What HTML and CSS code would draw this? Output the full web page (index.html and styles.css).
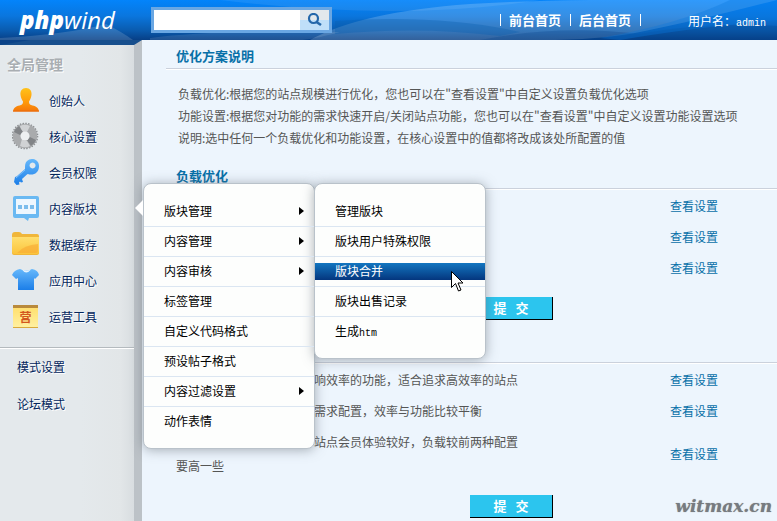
FILE: index.html
```html
<!DOCTYPE html>
<html lang="zh-CN">

<head>
	<meta charset="UTF-8">
	<title>phpwind</title>
	<meta name="viewport" content="width=device-width, initial-scale=1.0">
	<link rel="stylesheet" href="styles.css">
</head>

<body>
	<header class="head">
		<svg class="head-bg" viewBox="0 0 777 40" preserveAspectRatio="none" aria-hidden="true">
			<path d="M0 38Q70 34 106 24Q122 32 133 40H0z" fill="#fff" opacity=".15"/>
			<path d="M220 0Q400 22 540 0z" fill="#fff" opacity=".08"/>
			<path d="M310 40Q360 12 470 4Q560 -2 777 0Q700 20 640 32Q600 40 540 40z" fill="#fff" opacity=".18"/>
			<path d="M335 21Q440 14 520 32L500 36Q420 26 335 34z" fill="#0a5fae" opacity=".35"/>
			<path d="M150 38Q210 30 340 32Q310 40 300 40H150z" fill="#fff" opacity=".1"/>
			<path d="M480 40Q560 24 640 34Q700 22 777 26V40z" fill="#06458f" opacity=".3"/>
			<path d="M600 38Q680 24 730 0H777V20Q690 28 620 40z" fill="#0a78e0" opacity=".35"/>
		</svg>
		<svg class="head-corner" viewBox="0 0 142 5" aria-hidden="true">
			<path d="M0 0H142L134 5H0z" fill="#174f8d"/>
			<path d="M0 0H30L0 5z" fill="#0b4388"/>
		</svg>
		<a class="logo" href="#"><b>php</b>wind</a>
		<form class="search">
			<input type="text" aria-label="搜索">
			<button type="button" aria-label="搜索">
				<svg width="16" height="14" viewBox="0 0 16 14"><circle cx="6.500" cy="5.500" r="4.500" fill="none" stroke="#2467aa" stroke-width="2.200"/><path d="M9.500 9l4.500 3" stroke="#2467aa" stroke-width="2.600"/></svg>
			</button>
		</form>
		<nav class="links">
			<a href="#">前台首页</a>
			<a href="#">后台首页</a>
		</nav>
		<span class="user">用户名：<span class="en">admin</span></span>
	</header>

	<div class="wrap">
		<aside class="side">
			<h1>全局管理</h1>
			<ul class="nav">
				<li>
					<svg width="28" height="28" viewBox="0 0 28 28">
						<defs>
							<linearGradient id="gOrange" x2="0" y2="1"><stop offset="0" stop-color="#ffc21a"/><stop offset=".6" stop-color="#ff9a0a"/><stop offset="1" stop-color="#f4760a"/></linearGradient>
							<linearGradient id="gBlue" x2="0" y2="1"><stop offset="0" stop-color="#66b8fb"/><stop offset="1" stop-color="#1b7ee8"/></linearGradient>
							<linearGradient id="gYellow" x2="0" y2="1"><stop offset="0" stop-color="#ffdf6e"/><stop offset="1" stop-color="#fbc43c"/></linearGradient>
						</defs>
						<path d="M14 2c4 0 6 3 5.500 7-.4 3-1.500 5-2.500 6.500 0 2 .5 3 2 3.500 4 1 7.500 2 8 6.500H1c.5-4.500 4-5.500 8-6.500 1.500-.5 2-1.500 2-3.500C10 14 8.900 12 8.500 9 8 5 10 2 14 2z" fill="url(#gOrange)"/>
						<path d="M1 25h26" stroke="#e86a0c"/>
					</svg>
					<a href="#">创始人</a>
				</li>
				<li>
					<svg width="28" height="28" viewBox="0 0 28 28">
						<circle cx="13" cy="14" r="12.500" fill="none" stroke="#8c8f92" stroke-width="1.600" stroke-dasharray="1.500 1.300"/>
						<circle cx="13" cy="14" r="8.200" fill="none" stroke="#a9abad" stroke-width="8"/>
						<path d="M8 4a11 11 0 0 1 10 0l-3 6a5 5 0 0 0-5 1zM18 24a11 11 0 0 1-10 0l2-7a5 5 0 0 0 5 2z" fill="#d0d2d4"/>
						<path d="M2 10a12 12 0 0 1 5-6l4 6-3 3zM24 18a12 12 0 0 1-5 6l-4-6 3-3z" fill="#818487"/>
						<circle cx="13" cy="14" r="4.500" fill="#eef0f1"/>
					</svg>
					<a href="#">核心设置</a>
				</li>
				<li>
					<svg width="28" height="28" viewBox="0 0 28 28">
						<path fill-rule="evenodd" d="M15 3a7 7 0 0 1 6-2c4 .5 6.500 4 6 8-.5 5-4 8-9 7.500-1 0-2-.3-2.500-.5L10 21l1 3-2 .5-1-1-1 1 .5 2-3 .500-2.500-3 1-5 1.500-.5 8.500-7.500c0-4 0-6 2-8zM20.500 4.500a3 3 0 1 0 .1 0z" fill="url(#gBlue)"/>
						<path d="M4 20l9-8" stroke="#9bd2ff" opacity=".7"/>
					</svg>
					<a href="#">会员权限</a>
				</li>
				<li>
					<svg width="28" height="28" viewBox="0 0 28 28">
						<path d="M3 2h22q2 0 2 2v18q0 2-2 2h-8l-1 3-4-3H3q-2 0-2-2V4q0-2 2-2z" fill="#6ab9f2"/>
						<path d="M4 5h20v15H4z" fill="#eef7fe"/>
						<path d="M6 11h4v4H6zM12 11h4v4h-4zM18 11h4v4h-4z" fill="#7cbdec"/>
					</svg>
					<a href="#">内容版块</a>
					<div class="flyout">
						<ul class="menu">
							<li class="more"><a href="#">版块管理</a></li>
							<li class="more"><a href="#">内容管理</a></li>
							<li class="more"><a href="#">内容审核</a></li>
							<li><a href="#">标签管理</a></li>
							<li><a href="#">自定义代码格式</a></li>
							<li><a href="#">预设帖子格式</a></li>
							<li class="more"><a href="#">内容过滤设置</a></li>
							<li><a href="#">动作表情</a></li>
						</ul>
						<ul class="menu">
							<li><a href="#">管理版块</a></li>
							<li><a href="#">版块用户特殊权限</a></li>
							<li class="on"><a href="#">版块合并</a>
								<svg class="cursor" width="13" height="21" viewBox="0 0 13 21"><path d="M.5.500v16l4-4 3 7.500 2.500-1-3-7h5z" fill="#fff" stroke="#000"/></svg>
							</li>
							<li><a href="#">版块出售记录</a></li>
							<li><a href="#">生成<span class="en">htm</span></a></li>
						</ul>
					</div>
				</li>
				<li>
					<svg width="28" height="28" viewBox="0 0 28 28">
						<path d="M0 5q0-3 3-3h4q2 0 3 2h15q2 0 2 2v17q0 2-2 2H2q-2 0-2-2z" fill="#f0b63a"/>
						<path d="M0 7h27v15q0 2-2 2H2q-2 0-2-2z" fill="url(#gYellow)"/>
						<path d="M5 23q7-8 21-9v7q0 2-2 2z" fill="#f8a832" opacity=".6"/>
					</svg>
					<a href="#">数据缓存</a>
				</li>
				<li>
					<svg width="28" height="28" viewBox="0 0 28 28">
						<path d="M8 3q6 3 12 0 6 1 7 6l-4 4-1-1v12H6V12l-2 1-4-4Q2 4 8 3z" fill="url(#gBlue)"/>
						<path d="M10 3.500q4 6 9 0-4 2-9 0z" fill="#e6f3fe"/>
					</svg>
					<a href="#">应用中心</a>
				</li>
				<li>
					<span class="cal">营</span>
					<a href="#">运营工具</a>
				</li>
			</ul>
			<ul class="modes">
				<li><a href="#">模式设置</a></li>
				<li><a href="#">论坛模式</a></li>
			</ul>
		</aside>

		<main class="main">
			<section>
				<h2>优化方案说明</h2>
				<p>负载优化:根据您的站点规模进行优化，您也可以在"查看设置"中自定义设置负载优化选项<br>
					功能设置:根据您对功能的需求快速开启/关闭站点功能，您也可以在"查看设置"中自定义设置功能设置选项<br>
					说明:选中任何一个负载优化和功能设置，在核心设置中的值都将改成该处所配置的值</p>
			</section>

			<section>
				<h2>负载优化</h2>
				<table>
					<tr>
						<td></td>
						<td><a href="#">查看设置</a></td>
					</tr>
					<tr>
						<td></td>
						<td><a href="#">查看设置</a></td>
					</tr>
					<tr>
						<td></td>
						<td><a href="#">查看设置</a></td>
					</tr>
				</table>
				<div class="submit"><button type="button">提&nbsp;&nbsp;&nbsp;交</button></div>
			</section>

			<section class="func">
				<table>
					<tr>
						<td>响效率的功能，适合追求高效率的站点</td>
						<td><a href="#">查看设置</a></td>
					</tr>
					<tr>
						<td>需求配置，效率与功能比较平衡</td>
						<td><a href="#">查看设置</a></td>
					</tr>
					<tr>
						<td>站点会员体验较好，负载较前两种配置要高一些</td>
						<td><a href="#">查看设置</a></td>
					</tr>
				</table>
				<div class="submit"><button type="button">提&nbsp;&nbsp;&nbsp;交</button></div>
			</section>
			<span class="mark">witmax.cn</span>
		</main>
	</div>
</body>

</html>
```
FILE: styles.css
```css
* {
	box-sizing: border-box;
	margin: 0;
	padding: 0;
}

body {
	display: flex;
	flex-direction: column;
	min-height: 100vh;
	font-family: "Noto Sans CJK SC", sans-serif;
	font-size: 12px;
	color: #555;
	background: #edf5fd;
}

ul {
	list-style: none;
}

a {
	color: inherit;
	text-decoration: none;
}

.en {
	font-family: "Liberation Mono", monospace;
	font-size: 10px;
}

/* header */
.head {
	position: relative;
	display: flex;
	align-items: center;
	height: 40px;
	padding-right: 11px;
	color: #fff;
	background: linear-gradient(#0384fb, #0a76de 40%, #0a5cb0 75%, #073f86);
}

.head > * {
	position: relative;
}

.head .head-bg {
	position: absolute;
	left: 0;
	top: 0;
	width: 100%;
	height: 40px;
}

.head .head-corner {
	position: absolute;
	left: 0;
	top: 40px;
	width: 142px;
	height: 5px;
	z-index: 1;
}

.logo {
	width: 131px;
	margin-left: 20px;
	font: italic 500 24px/40px "Open Sans", sans-serif;
}

.logo b {
	font-weight: 800;
}

.search {
	display: flex;
	width: 181px;
	height: 26px;
	border: 3px solid #6aa7e3;
}

.search input {
	flex: 1;
	min-width: 0;
	border: 0;
	background: #fff;
}

.search button {
	width: 29px;
	border: 0;
	background: linear-gradient(#e3e8ec 50%, #bfdff9 50%);
}

.search svg {
	display: block;
	margin: 0 auto;
}

.links {
	display: flex;
	margin-left: auto;
	border-right: 1px solid #fff;
	font-size: 13px;
	font-weight: bold;
	line-height: 12px;
}

.links a {
	width: 70px;
	padding-left: 8px;
	border-left: 1px solid #fff;
}

.user {
	margin-left: 47px;
	font-family: "Noto Sans CJK TC", sans-serif;
}

/* sidebar */
.wrap {
	display: flex;
	flex: 1;
}

.side {
	flex: none;
	width: 142px;
	padding-top: 12px;
	border-right: 8px solid #bcc2c7;
	background: linear-gradient(90deg, #e4e9ec 60%, #e2e6e8 90%, #d8dde0);
	color: #03265c;
	text-shadow: 1px 1px 0 #fff;
}

.side h1 {
	padding-left: 7px;
	font-size: 14px;
	line-height: 24px;
	color: #a9aeb2;
}

.nav {
	padding: 6px 0 13px;
	border-bottom: 1px solid #b4babe;
	box-shadow: 0 1px 0 #fff;
}

.nav > li {
	position: relative;
	display: flex;
	align-items: center;
	gap: 9px;
	height: 36px;
	padding-left: 12px;
}

.cal {
	width: 25px;
	height: 22px;
	margin: 0 2px 0 1px;
	border-top: 3px solid #b98a3c;
	background: linear-gradient(#ffe070, #fff0a0);
	box-shadow: 0 1px 0 #d9a93c;
	color: #d2571e;
	font-weight: bold;
	line-height: 18px;
	text-align: center;
	text-shadow: none;
}

.modes {
	padding-left: 17px;
	line-height: 37px;
}

/* fly-out menus */
.flyout {
	position: absolute;
	z-index: 2;
	left: 143px;
	top: -7px;
	display: flex;
	align-items: flex-start;
	color: #000;
	text-shadow: none;
}

.flyout::before {
	content: "";
	position: absolute;
	z-index: 1;
	left: -8px;
	top: 17px;
	border: 8px solid transparent;
	border-left: 0;
	border-right-color: #fff;
}

.menu {
	width: 172px;
	padding: 13px 0 12px;
	border: 1px solid #b9c2ca;
	border-radius: 8px;
	background: #fdfefd;
	box-shadow: 0 1px 12px rgba(90, 100, 110, .5);
}

.menu + .menu {
	margin-left: -1px;
}

.menu li {
	position: relative;
	height: 30px;
	padding: 6px 0;
	border-bottom: 1px solid #dbe6f2;
}

.menu li:last-child {
	height: 29px;
	border-bottom: 0;
}

.menu a {
	display: block;
	padding: 0 0 2px 20px;
	line-height: 15px;
}

.menu .more::after {
	content: "";
	position: absolute;
	right: 10px;
	top: 10px;
	border: 4px solid transparent;
	border-left: 5px solid #000;
	border-right: 0;
}

.menu .on a {
	color: #fff;
	background: linear-gradient(#1376c0, #04367e);
}

.cursor {
	position: absolute;
	left: 136px;
	top: 14px;
}

/* content */
.main {
	position: relative;
	flex: 1;
	padding: 4px 0 3px 24px;
}

h2 {
	padding-left: 10px;
	border-bottom: 1px solid #cbd1dc;
	box-shadow: 0 1px 0 #fff;
	color: #0870a8;
	font-size: 13px;
	line-height: 24px;
}

p {
	padding: 14px 0 15px 12px;
	line-height: 22px;
}

table {
	width: 100%;
	margin-top: 2px;
	border-collapse: collapse;
}

td {
	height: 31px;
	padding: 3px 145px 4px 10px;
	line-height: 24px;
}

td + td {
	width: 107px;
	padding: 3px 0 4px;
	color: #0870a8;
}

.submit {
	padding: 13px 0 0 304px;
}

.submit button {
	display: block;
	width: 83px;
	height: 23px;
	border: solid #000;
	border-width: 0 1px 1px 0;
	background: #2cc5ee;
	color: #fff;
	font: bold 13px/20px "Noto Sans CJK SC", sans-serif;
}

.func {
	margin-top: 42px;
	border-top: 1px solid #cbd1dc;
	box-shadow: inset 0 1px 0 #fff;
}

.func td:first-child {
	text-indent: 138px;
}

.mark {
	position: absolute;
	right: 5px;
	bottom: 4px;
	color: #777b80;
	font: italic bold 17px/22px "DejaVu Serif", serif;
	text-shadow: 0 0 1px #999;
}
```
